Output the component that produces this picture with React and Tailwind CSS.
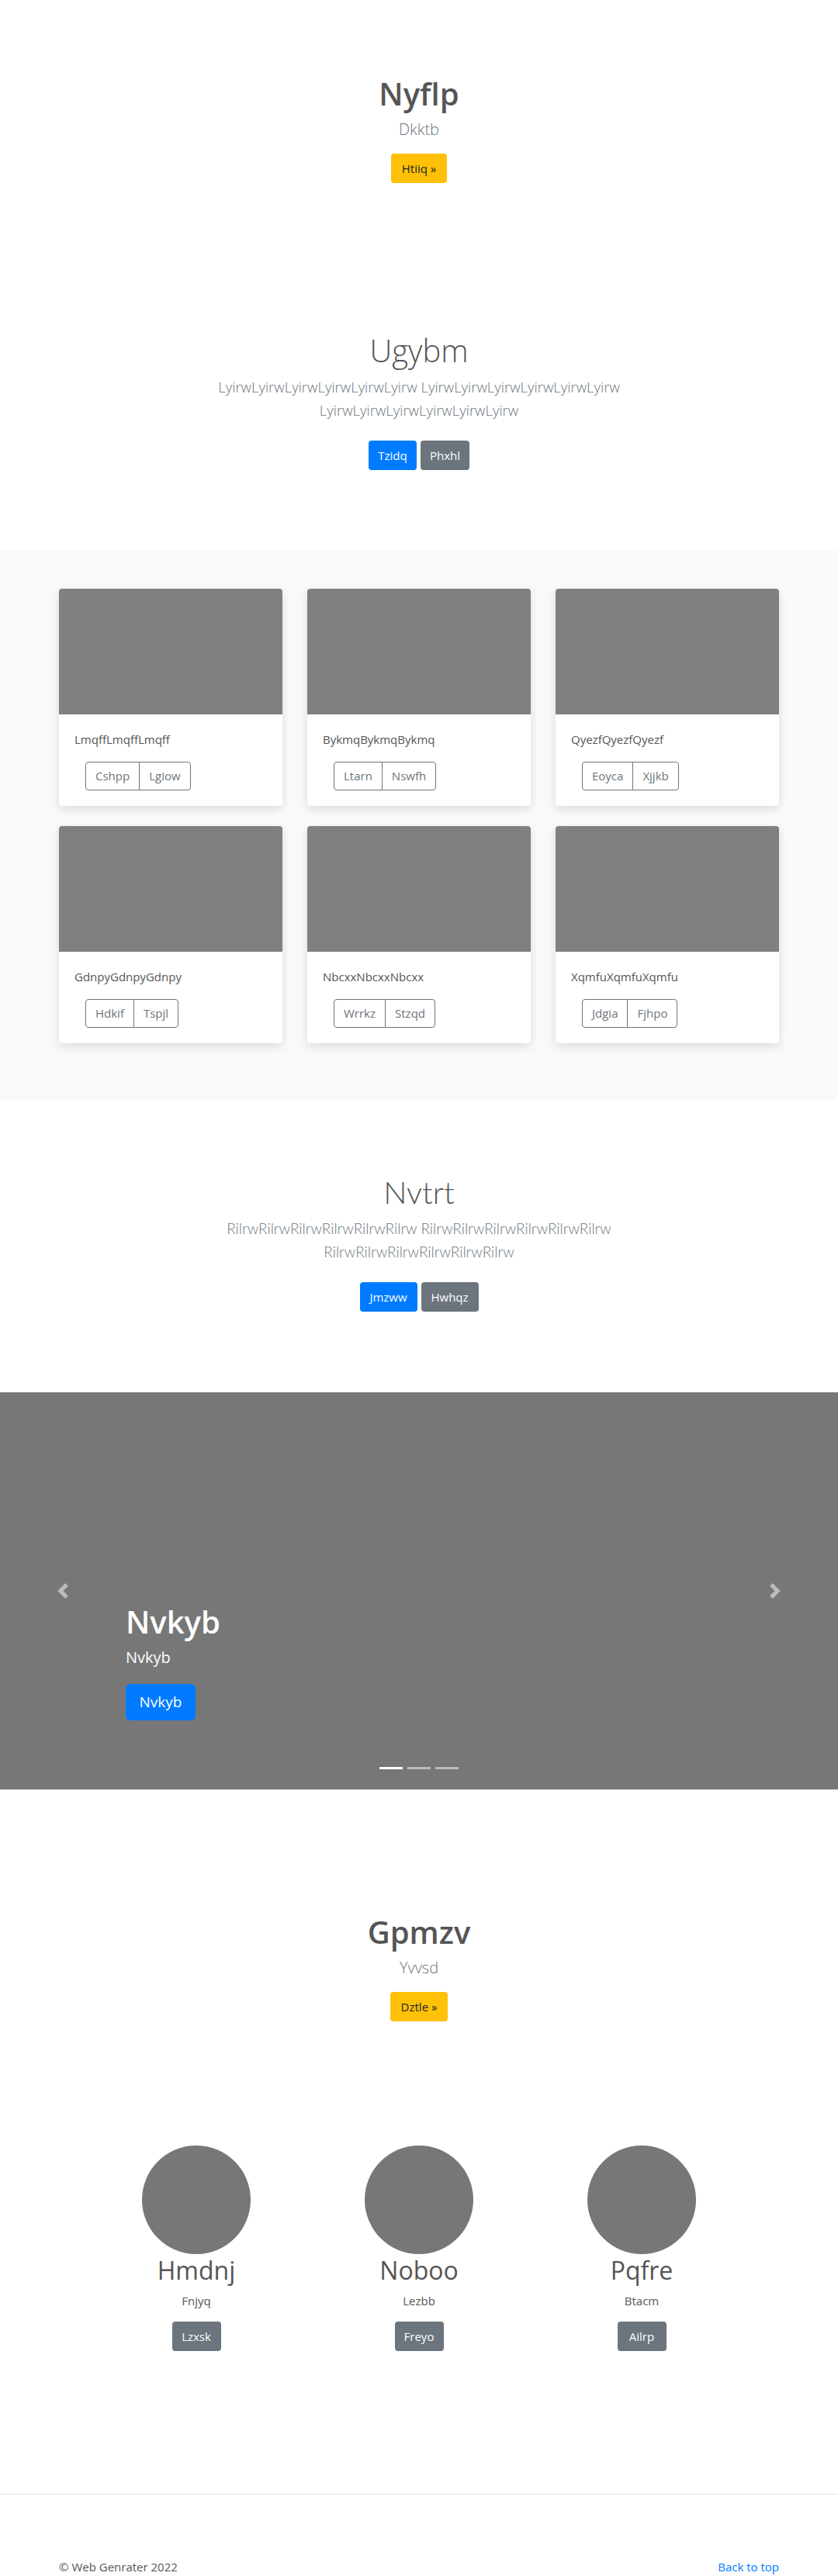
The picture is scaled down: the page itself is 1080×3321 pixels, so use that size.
import React from "react";

const cards = [
  { title: "LmqffLmqffLmqff", a: "Cshpp", b: "Lgiow" },
  { title: "BykmqBykmqBykmq", a: "Ltarn", b: "Nswfh" },
  { title: "QyezfQyezfQyezf", a: "Eoyca", b: "Xjjkb" },
  { title: "GdnpyGdnpyGdnpy", a: "Hdkif", b: "Tspjl" },
  { title: "NbcxxNbcxxNbcxx", a: "Wrrkz", b: "Stzqd" },
  { title: "XqmfuXqmfuXqmfu", a: "Jdgia", b: "Fjhpo" },
];

const team = [
  { name: "Hmdnj", role: "Fnjyq", btn: "Lzxsk" },
  { name: "Noboo", role: "Lezbb", btn: "Freyo" },
  { name: "Pqfre", role: "Btacm", btn: "Ailrp" },
];

const Chevron = ({ flip }) => (
  <svg viewBox="0 0 8 8" className={"h-5 w-5 " + (flip ? "rotate-180" : "")} fill="rgba(255,255,255,0.5)">
    <path d="M5.25 0l-4 4 4 4 1.5-1.5L4.25 4l2.5-2.5L5.25 0z" />
  </svg>
);

export default function App() {
  return (
    <div className="bg-white text-[#212529] font-['Open_Sans',sans-serif]">
      {/* hero */}
      <section className="pt-[97px] text-center">
        <h1 className="text-[40px] leading-[48px] font-semibold text-[#555]">Nyflp</h1>
        <p className="mt-[7px] text-[20px] leading-[30px] font-light text-[#6c757d]">Dkktb</p>
        <a className="mt-4 inline-flex h-[38px] w-[72px] items-center justify-center rounded bg-[#ffc107] text-[15px] text-[#212529]">
          Htiiq »
        </a>
      </section>

      {/* jumbotron */}
      <section className="mt-[192px] text-center">
        <div className="mx-auto max-w-[600px]">
          <h1 className="text-[40px] leading-[48px] font-light text-[#555]">Ugybm</h1>
          <p className="mt-2 text-[18.5px] leading-[30px] font-light text-[#6c757d]">
            LyirwLyirwLyirwLyirwLyirwLyirw LyirwLyirwLyirwLyirwLyirwLyirw LyirwLyirwLyirwLyirwLyirwLyirw
          </p>
          <div className="mt-6 flex justify-center gap-[5px]">
            <a className="inline-flex h-[38px] w-[62px] items-center justify-center rounded bg-[#007bff] text-[15px] text-white">Tzidq</a>
            <a className="inline-flex h-[38px] w-[63px] items-center justify-center rounded bg-[#6c757d] text-[15px] text-white">Phxhl</a>
          </div>
        </div>
      </section>

      {/* album */}
      <section className="mt-[104px] bg-[#f8f9fa] pt-[49px] pb-[73px]">
        <div className="mx-auto grid w-[928px] grid-cols-3 gap-x-8 gap-y-[26px]">
          {cards.map((c) => (
            <div key={c.title} className="overflow-hidden rounded bg-white shadow-[0_4px_12px_rgba(0,0,0,0.12)]">
              <div className="h-[162px] bg-[#808080]" />
              <div className="px-5 pt-5 pb-5">
                <p className="text-[15px] leading-[24px] text-[#555]">{c.title}</p>
                <div className="mt-[17px] ml-[14px] inline-flex">
                  <button className="h-[37px] rounded-l border border-[#6c757d] px-3 text-[15px] text-[#6c757d]">{c.a}</button>
                  <button className="-ml-px h-[37px] rounded-r border border-[#6c757d] px-3 text-[15px] text-[#6c757d]">{c.b}</button>
                </div>
              </div>
            </div>
          ))}
        </div>
      </section>

      {/* second jumbotron */}
      <section className="mt-[95px] text-center font-['Lato',sans-serif]">
        <div className="mx-auto max-w-[600px]">
          <h1 className="text-[40px] leading-[48px] font-light text-[#555]">Nvtrt</h1>
          <p className="mt-2 text-[19px] leading-[30px] font-light text-[#6c757d]">
            RilrwRilrwRilrwRilrwRilrwRilrw RilrwRilrwRilrwRilrwRilrwRilrw RilrwRilrwRilrwRilrwRilrwRilrw
          </p>
          <div className="mt-6 flex justify-center gap-[5px] font-['Open_Sans',sans-serif]">
            <a className="inline-flex h-[38px] w-[74px] items-center justify-center rounded bg-[#007bff] text-[15px] text-white">Jmzww</a>
            <a className="inline-flex h-[38px] w-[74px] items-center justify-center rounded bg-[#6c757d] text-[15px] text-white">Hwhqz</a>
          </div>
        </div>
      </section>

      {/* carousel */}
      <section className="relative mt-[104px] flex h-[512px] flex-col justify-end bg-[#777] pb-[89px] pl-[15%]">
        <h1 className="text-[40px] leading-[48px] font-semibold text-white">Nvkyb</h1>
        <p className="mt-[7px] text-[20px] leading-[30px] text-white">Nvkyb</p>
        <div className="mt-[19px]">
          <a className="inline-flex h-[47px] w-[90px] items-center justify-center rounded-md bg-[#007bff] text-[19px] text-white">Nvkyb</a>
        </div>
        <div className="absolute top-0 left-0 flex h-full w-[15%] items-center justify-center">
          <Chevron />
        </div>
        <div className="absolute top-0 right-0 flex h-full w-[15%] items-center justify-center">
          <Chevron flip />
        </div>
        <div className="absolute bottom-[26px] left-0 flex w-full justify-center gap-[6px]">
          <span className="h-[3px] w-[30px] bg-white" />
          <span className="h-[3px] w-[30px] bg-white/50" />
          <span className="h-[3px] w-[30px] bg-white/50" />
        </div>
      </section>

      {/* heading */}
      <section className="mt-[160px] text-center">
        <h1 className="text-[40px] leading-[48px] font-semibold text-[#555]">Gpmzv</h1>
        <p className="mt-[7px] text-[20px] leading-[30px] font-light text-[#6c757d]">Yvvsd</p>
        <a className="mt-4 inline-flex h-[38px] w-[74px] items-center justify-center rounded bg-[#ffc107] text-[15px] text-[#212529]">
          Dztle »
        </a>
      </section>

      {/* team */}
      <section className="mx-auto mt-[160px] grid w-[861px] grid-cols-3 text-center">
        {team.map((t) => (
          <div key={t.name} className="flex flex-col items-center">
            <div className="h-[140px] w-[140px] rounded-full bg-[#777]" />
            <h2 className="text-[32px] leading-[41px] font-normal text-[#555]">{t.name}</h2>
            <p className="mt-[7px] text-[15px] leading-[24px] text-[#555]">{t.role}</p>
            <a className="mt-[15px] inline-flex h-[38px] w-[63px] items-center justify-center rounded bg-[#6c757d] text-[15px] text-white">
              {t.btn}
            </a>
          </div>
        ))}
      </section>

      {/* footer */}
      <footer className="mt-[184px] border-t border-[#e5e5e5] pt-[81px]">
        <div className="mx-auto flex w-[928px] justify-between text-[15px] leading-[24px]">
          <p className="text-[#555]">© Web Genrater 2022</p>
          <a className="text-[#007bff]">Back to top</a>
        </div>
      </footer>
    </div>
  );
}
